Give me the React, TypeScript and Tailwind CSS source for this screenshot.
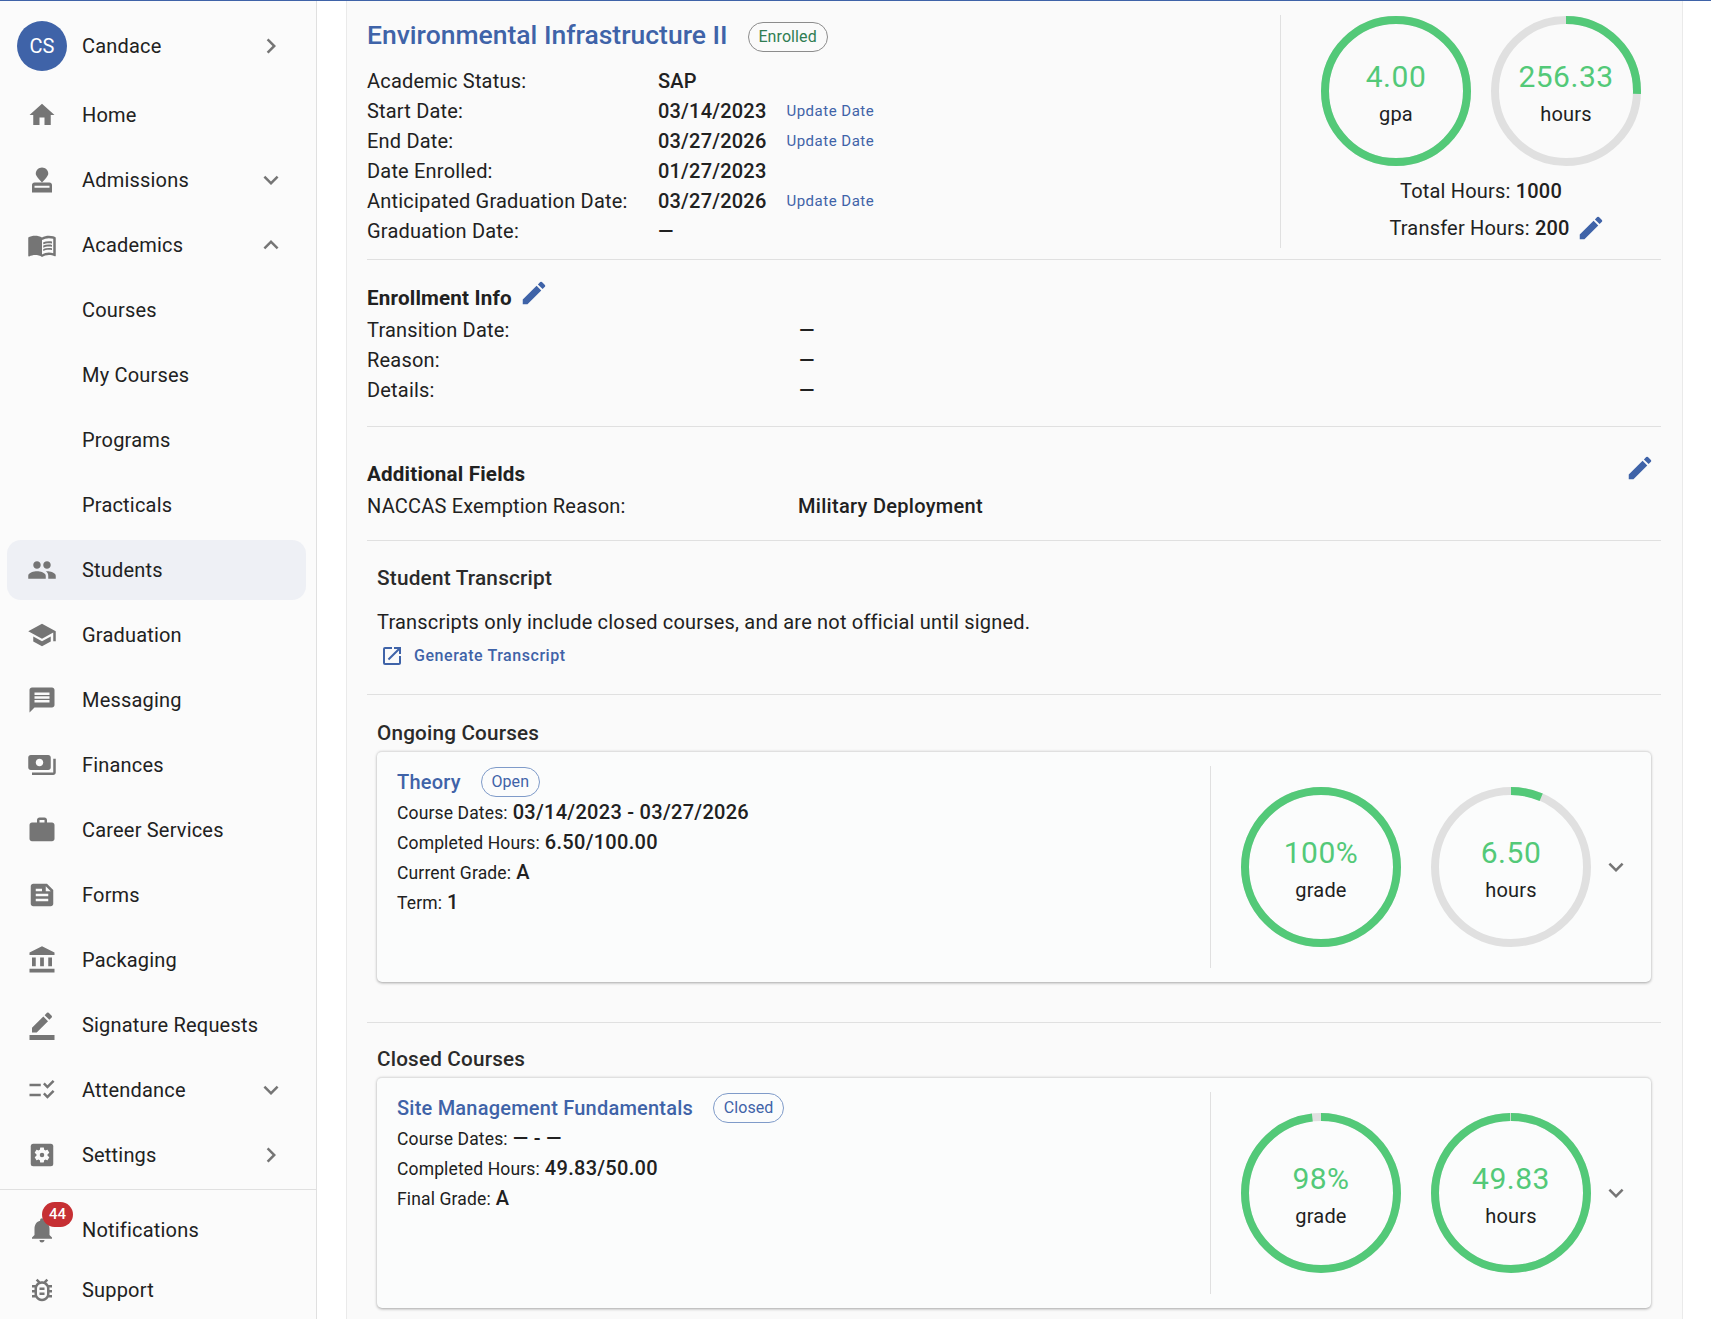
import React from "react";
import {
  MdHome, MdMenuBook, MdPeople, MdSchool, MdMessage, MdPayments, MdWork, MdFeed,
  MdAccountBalance, MdBorderColor, MdChecklistRtl, MdNotifications,
  MdOutlineBugReport, MdChevronRight, MdExpandMore, MdExpandLess, MdEdit, MdOpenInNew,
} from "react-icons/md";

function StampIcon({ size }: { size?: number }) {
  return (
    <svg width={size} height={size} viewBox="0 0 24 24" fill="currentColor">
      <path d="M4 16v6h16v-6c0-1.1-.9-2-2-2H6c-1.1 0-2 .9-2 2zm14 2.2H6v-1.6h12v1.6z" />
      <path d="M12 2C9.24 2 7 4.24 7 7c0 1.2 1.2 3 5 7 3.8-4 5-5.800 5-7 0-2.760-2.240-5-5-5z" />
    </svg>
  );
}

function SettingsIcon({ size }: { size?: number }) {
  return (
    <svg width={size} height={size} viewBox="0 0 24 24">
      <rect x="3" y="3" width="18" height="18" rx="2" fill="currentColor" />
      <g transform="translate(12 12) scale(0.85) translate(-12 -12)">
        <path
          fill="#fbfbfb"
          d="M17.25 12c0 .23-.02.46-.05.68l1.48 1.16c.13.11.17.3.08.45l-1.4 2.42c-.09.15-.27.21-.43.15l-1.74-.7c-.36.28-.76.51-1.18.69l-.26 1.85c-.03.17-.18.3-.35.3h-2.8c-.17 0-.32-.13-.35-.29l-.26-1.85c-.43-.18-.82-.41-1.18-.69l-1.74.7c-.16.06-.34 0-.43-.15l-1.4-2.42c-.09-.15-.05-.34.08-.45l1.48-1.16c-.03-.23-.05-.46-.05-.69 0-.23.02-.46.05-.68l-1.48-1.16c-.13-.11-.17-.3-.08-.45l1.4-2.42c.09-.15.27-.21.43-.15l1.74.7c.36-.28.76-.51 1.18-.69l.26-1.85c.03-.17.18-.3.35-.3h2.8c.17 0 .32.13.35.29l.26 1.85c.43.18.82.41 1.18.69l1.74-.7c.16-.06.34 0 .43.15l1.4 2.42c.09.15.05.34-.08.45l-1.48 1.16c.03.23.05.46.05.69z"
        />
        <circle cx="12" cy="12" r="2.1" fill="currentColor" />
      </g>
    </svg>
  );
}

type Item = { label: string; icon?: React.ElementType; end?: React.ElementType; active?: boolean };

const items: Item[] = [
  { label: "Home", icon: MdHome },
  { label: "Admissions", icon: StampIcon, end: MdExpandMore },
  { label: "Academics", icon: MdMenuBook, end: MdExpandLess },
  { label: "Courses" },
  { label: "My Courses" },
  { label: "Programs" },
  { label: "Practicals" },
  { label: "Students", icon: MdPeople, active: true },
  { label: "Graduation", icon: MdSchool },
  { label: "Messaging", icon: MdMessage },
  { label: "Finances", icon: MdPayments },
  { label: "Career Services", icon: MdWork },
  { label: "Forms", icon: MdFeed },
  { label: "Packaging", icon: MdAccountBalance },
  { label: "Signature Requests", icon: MdBorderColor },
  { label: "Attendance", icon: MdChecklistRtl, end: MdExpandMore },
  { label: "Settings", icon: SettingsIcon, end: MdChevronRight },
];

function NavRow({ item }: { item: Item }) {
  const Icon = item.icon;
  const End = item.end;
  return (
    <div className={`ml-[7px] mr-[10px] h-[60px] shrink-0 flex items-center pl-5 pr-5 rounded-[14px] ${item.active ? "bg-[#eef0f5]" : ""}`}>
      <div className="w-[30px] h-[30px] shrink-0 text-[#757575]">{Icon ? <Icon size={30} /> : null}</div>
      <div className="ml-[25px] flex-1 text-[20px] leading-[30px] tracking-[0.19px] text-[#212121]">{item.label}</div>
      {End ? <End size={30} className="text-[#757575]" /> : null}
    </div>
  );
}

function Sidebar() {
  return (
    <aside className="w-[317px] shrink-0 h-full overflow-hidden bg-[#fbfbfb] border-r border-[#e0e0e0] flex flex-col pt-[15px]">
      <div className="ml-[7px] mr-[10px] h-[60px] shrink-0 flex items-center pl-[10px] pr-5">
        <div className="w-[50px] h-[50px] rounded-full bg-[#3f63a8] text-white text-[20px] flex items-center justify-center shrink-0">CS</div>
        <div className="ml-[15px] flex-1 text-[20px] leading-[30px] tracking-[0.19px] text-[#212121]">Candace</div>
        <MdChevronRight size={30} className="text-[#757575]" />
      </div>
      <div className="mt-[9px] shrink-0 flex flex-col gap-[5px]">
        {items.map((i) => (
          <NavRow key={i.label} item={i} />
        ))}
      </div>
      <div className="mt-1 shrink-0 border-t border-[#e0e0e0] pt-[10px]">
        <div className="ml-[7px] mr-[10px] h-[60px] flex items-center pl-5 pr-5">
          <div className="relative w-[30px] h-[30px] shrink-0 text-[#757575]">
            <MdNotifications size={30} />
            <span className="absolute left-[15px] top-[-13px] w-[31px] h-[25px] rounded-full bg-[#c62f33] text-white text-[15px] font-medium flex items-center justify-center">44</span>
          </div>
          <div className="ml-[25px] text-[20px] leading-[30px] tracking-[0.19px] text-[#212121]">Notifications</div>
        </div>
        <div className="ml-[7px] mr-[10px] h-[60px] flex items-center pl-5 pr-5">
          <MdOutlineBugReport size={30} className="text-[#757575] shrink-0" />
          <div className="ml-[25px] text-[20px] leading-[30px] tracking-[0.19px] text-[#212121]">Support</div>
        </div>
      </div>
    </aside>
  );
}

function Ring({ size, value, max, text, label }: { size: number; value: number; max: number; text: string; label: string }) {
  const stroke = 8;
  const r = (size - stroke) / 2;
  const c = 2 * Math.PI * r;
  const frac = Math.min(value / max, 1);
  return (
    <div className="grid place-items-center shrink-0" style={{ width: size, height: size }}>
      <svg width={size} height={size} className="col-start-1 row-start-1 -rotate-90">
        <circle cx={size / 2} cy={size / 2} r={r} fill="none" stroke="#e0e0e0" strokeWidth={stroke} />
        <circle cx={size / 2} cy={size / 2} r={r} fill="none" stroke="#53c978" strokeWidth={stroke} strokeDasharray={`${frac * c} ${c}`} />
      </svg>
      <div className="col-start-1 row-start-1 flex flex-col items-center">
        <div className="pt-[2px] text-[30px] leading-[44px] tracking-[0.5px] text-[#53c978]">{text}</div>
        <div className="text-[20px] leading-[30px] tracking-[0.19px] text-[#212121]">{label}</div>
      </div>
    </div>
  );
}

function Chip({ label, className }: { label: string; className: string }) {
  return (
    <span className={`h-[30px] inline-flex items-center justify-center rounded-full border text-[16px] tracking-[0.1px] ${className}`}>{label}</span>
  );
}

function InfoRow({ label, value, update, col, valueClass = "" }: { label: string; value: string; update?: boolean; col: string; valueClass?: string }) {
  return (
    <div className="flex items-center h-[30px] text-[20px] tracking-[0.19px] text-[#212121]">
      <div className={`shrink-0 ${col}`}>{label}</div>
      <div className={`font-medium ${valueClass}`}>{value}</div>
      {update ? <div className="ml-[20px] text-[15px] tracking-[0.5px] text-[#3f63a8]">Update Date</div> : null}
    </div>
  );
}

function CourseCard({ title, chip, chipClass, rows, rings }: {
  title: string; chip: string; chipClass: string;
  rows: [string, string][];
  rings: { value: number; max: number; text: string; label: string }[];
}) {
  return (
    <div className="h-[231px] bg-[#fbfcfc] rounded-[5px] border-t border-[#e0e0e0] shadow-[0_1px_3px_rgba(0,0,0,0.35)] flex py-[14px]">
      <div className="flex-1 pl-5 pt-[1px]">
        <div className="flex items-center h-[30px] gap-[20px]">
          <div className="text-[20px] font-medium tracking-[0.22px] text-[#3f63a8]">{title}</div>
          <Chip label={chip} className={chipClass} />
        </div>
        {rows.map(([l, v]) => (
          <div key={l} className="flex items-baseline h-[30px] leading-[30px] text-[#212121]">
            <span className="text-[17.5px] tracking-[0.14px] mr-[5px]">{l}</span>
            <span className="text-[20px] font-medium tracking-[0.28px]">{v}</span>
          </div>
        ))}
      </div>
      <div className="w-[441px] border-l border-[#e0e0e0] pl-[30px] flex items-center">
        <Ring size={160} {...rings[0]} />
        <div className="w-[30px]" />
        <Ring size={160} {...rings[1]} />
        <MdExpandMore size={30} className="ml-[10px] text-[#757575]" />
      </div>
    </div>
  );
}

export default function App() {
  return (
    <div className="w-[1711px] h-[1319px] overflow-hidden bg-white flex flex-col [font-family:Roboto,sans-serif]">
      <div className="h-px bg-[#3f63a8] shrink-0" />
      <div className="flex flex-1 min-h-0">
        <Sidebar />
        <main className="ml-[29px] w-[1337px] h-full bg-[#fafafa] border-x border-[#eaeaea] pl-5 pr-[21px]">
          <section className="flex pt-[14px] pb-[11px] border-b border-[#e0e0e0] h-[259px]">
            <div className="flex-1">
              <div className="flex items-center h-[40px] gap-[20px]">
                <div className="text-[26.5px] font-medium text-[#3f63a8]">Environmental Infrastructure II</div>
                <Chip label="Enrolled" className="w-[80px] mt-[4px] border-[#8c8c8c] text-[#2f7d52]" />
              </div>
              <div className="mt-[11px]">
                <InfoRow col="w-[291px]" label="Academic Status:" value="SAP" />
                <InfoRow col="w-[291px]" label="Start Date:" value="03/14/2023" update />
                <InfoRow col="w-[291px]" label="End Date:" value="03/27/2026" update />
                <InfoRow col="w-[291px]" label="Date Enrolled:" value="01/27/2023" />
                <InfoRow col="w-[291px]" label="Anticipated Graduation Date:" value="03/27/2026" update />
                <InfoRow col="w-[291px]" label="Graduation Date:" value="—" />
              </div>
            </div>
            <div className="w-[381px] border-l border-[#e0e0e0] pl-5 flex flex-col items-center">
              <div className="flex gap-5 mt-[1px]">
                <Ring size={150} value={4} max={4} text="4.00" label="gpa" />
                <Ring size={150} value={256.33} max={1000} text="256.33" label="hours" />
              </div>
              <div className="mt-[10px] h-[30px] leading-[30px] text-[20px] tracking-[0.19px] text-[#212121]">
                Total Hours: <span className="font-medium">1000</span>
              </div>
              <div className="mt-[7px] pl-[33px] flex items-center h-[30px] text-[20px] tracking-[0.19px] text-[#212121]">
                <span>Transfer Hours: <span className="font-medium">200</span></span>
                <MdEdit size={30} className="ml-[6px] text-[#3f63a8]" />
              </div>
            </div>
          </section>

          <section className="pt-[23px] pb-[21px] border-b border-[#e0e0e0]">
            <div className="flex items-center h-[30px] text-[20.6px] font-bold tracking-[0.19px] text-[#212121]">
              Enrollment Info
              <MdEdit size={30} className="ml-[7px] mb-[10px] text-[#3f63a8]" />
            </div>
            <div className="mt-[2px]">
              <InfoRow col="w-[432px]" label="Transition Date:" value="—" />
              <InfoRow col="w-[432px]" label="Reason:" value="—" />
              <InfoRow col="w-[432px]" label="Details:" value="—" />
            </div>
          </section>

          <section className="pt-[32px] pb-[19px] border-b border-[#e0e0e0]">
            <div className="flex items-center justify-between h-[30px] pr-[6px] text-[20.6px] font-bold tracking-[0.19px] text-[#212121]">
              Additional Fields
              <MdEdit size={30} className="mb-[12px] text-[#3f63a8]" />
            </div>
            <div className="mt-[2px]">
              <InfoRow col="w-[431px]" label="NACCAS Exemption Reason:" value="Military Deployment" valueClass="tracking-[0.3px]" />
            </div>
          </section>

          <section className="pl-[10px] pt-[22px] pb-[23px] border-b border-[#e0e0e0]">
            <div className="h-[30px] leading-[30px] text-[20.8px] font-medium tracking-[0.19px] text-[#2a2a2a]">Student Transcript</div>
            <div className="mt-[14px] h-[30px] leading-[30px] text-[20px] tracking-[0.19px] text-[#212121]">
              Transcripts only include closed courses, and are not official until signed.
            </div>
            <div className="mt-[4px] h-[30px] flex items-center text-[16px] font-medium tracking-[0.55px] text-[#3f63a8]">
              <MdOpenInNew size={24} className="ml-[3px] mr-[10px]" />
              Generate Transcript
            </div>
          </section>

          <section className="px-[10px] pt-[23px] pb-[40px] border-b border-[#e0e0e0]">
            <div className="h-[30px] leading-[30px] text-[20.7px] font-medium tracking-[0.19px] text-[#2a2a2a] mb-[3px]">Ongoing Courses</div>
            <CourseCard
              title="Theory"
              chip="Open"
              chipClass="w-[59px] border-[#7f9bc9] text-[#3f63a8]"
              rows={[
                ["Course Dates:", "03/14/2023 - 03/27/2026"],
                ["Completed Hours:", "6.50/100.00"],
                ["Current Grade:", "A"],
                ["Term:", "1"],
              ]}
              rings={[
                { value: 100, max: 100, text: "100%", label: "grade" },
                { value: 6.5, max: 100, text: "6.50", label: "hours" },
              ]}
            />
          </section>

          <section className="px-[10px] pt-[21px]">
            <div className="h-[30px] leading-[30px] text-[20.7px] font-medium tracking-[0.19px] text-[#2a2a2a] mb-[3px]">Closed Courses</div>
            <CourseCard
              title="Site Management Fundamentals"
              chip="Closed"
              chipClass="w-[71px] border-[#7f9bc9] text-[#3f63a8]"
              rows={[
                ["Course Dates:", "— - —"],
                ["Completed Hours:", "49.83/50.00"],
                ["Final Grade:", "A"],
              ]}
              rings={[
                { value: 98, max: 100, text: "98%", label: "grade" },
                { value: 49.83, max: 50, text: "49.83", label: "hours" },
              ]}
            />
          </section>
        </main>
      </div>
    </div>
  );
}
